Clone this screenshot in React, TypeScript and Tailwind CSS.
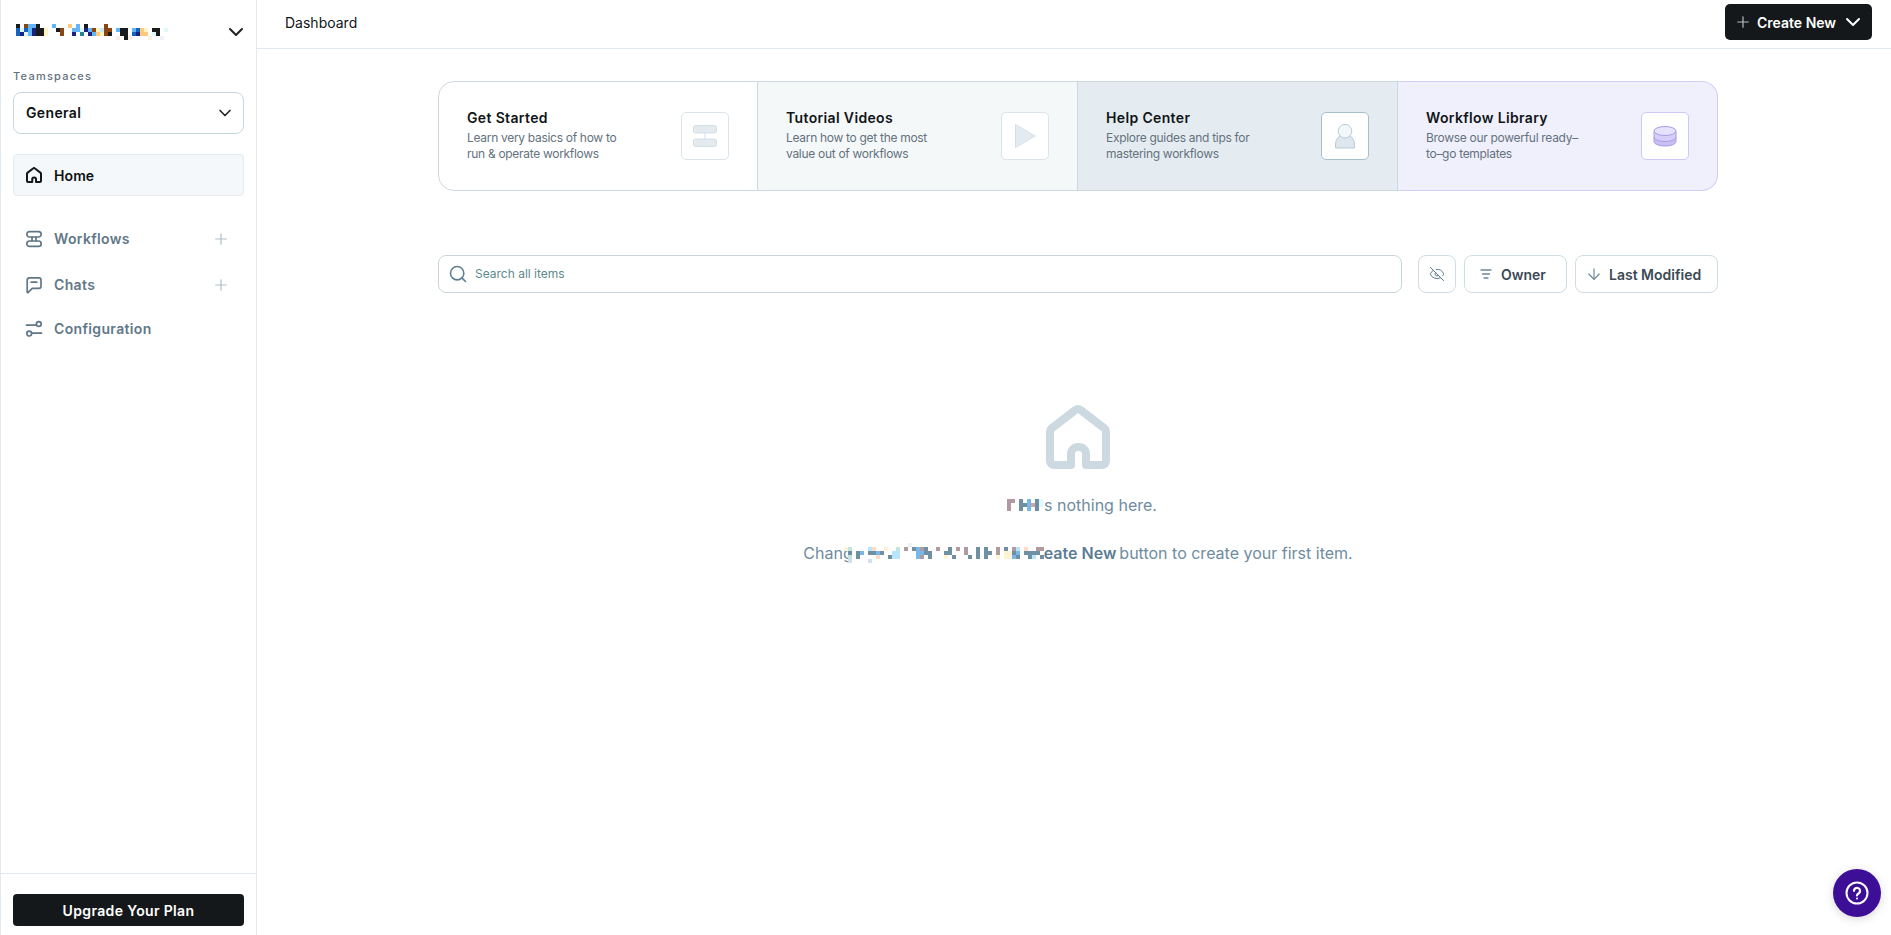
import React from "react";
import { ChevronDown, Plus, Search, EyeOff, ArrowDown } from "lucide-react";

const palette: Record<string, string> = {
  k: "#1a1a1a", b: "#1565c0", l: "#64b5f6", n: "#1a237e", o: "#8b4513", y: "#fff3c4", c: "#e0f7fa",
  g: "#ffc87a", t: "#26858a", p: "#fdeee6", w: "#eef0f8", r: "#cfe6f5",
};
const palette2: Record<string, string> = {
  s: "#6f8fa3", l: "#7ab6e8", c: "#b8e4ff", y: "#fff3d6", p: "#ffdcc8", t: "#c4e4e0", a: "#b09aa0",
  w: "#eef0f4", r: "#d0e0f0", m: "#c8a8a0", h: "#e0faff",
};

function Mosaic({ rows, colors, cols, className }: { rows: string[]; colors: Record<string, string>; cols: number; className?: string }) {
  return (
    <svg width={cols * 4} height={rows.length * 4} viewBox={`0 0 ${cols * 4} ${rows.length * 4}`} className={className} shapeRendering="crispEdges">
      {rows.map((row, ri) =>
        row.split(" ").filter(Boolean).map((tok) => {
          const col = parseInt(tok, 10);
          const ch = tok.replace(/[0-9]/g, "");
          return <rect key={ri + tok} x={col * 4} y={ri * 4} width="4" height="4" fill={colors[ch]} />;
        })
      )}
    </svg>
  );
}

const nameRows = [
  "0k 2o 3l 4l 5k 9l 13g 15l 17k 22o",
  "0b 1c 2b 3l 4n 5k 6k 7y 10k 11o 14l 15l 16c 17n 18l 19o 20y 21r 22o 23o 25l 26k 27k 29l 30b 31g 32y 34k 35k 37c",
  "0b 1n 2c 3l 4n 5k 6k 7y 11o 14n 16t 18n 19l 20g 21y 22o 23k 26k 27k 29b 30n 31g 32g 34c 35k",
  "25p 27k 28p 33p 36w",
];
const thereRows = [
  "2a 3a 5s 7l 9s 10h",
  "2a 5s 6s 7l 8m 9s 10h",
  "2a 5s 7l 9s",
];
const changeRows = [
  "16w",
  "0y 1t 6c 7p 10y 13t 15a 17s 18l 19a 20s 23a 26s 28a 30a 33s 35s 38a 40s 42a 43c 45p 48a 49a",
  "1s 3s 4l 6s 7s 8l 9s 12c 13c 18l 19l 20s 21s 25s 26s 30a 33s 35s 36s 38a 40y 41y 42s 43l 45s 46s 47s 48s",
  "1t 3s 8p 11s 12c 13c 18l 19a 21s 25y 27s 31s 33s 35s 38y 40y 41y 42l 43s 46s 47c 49s",
  "1r 6r",
];

const homePath =
  "M25 60H8a4 4 0 0 1-4-4V26.5a4 4 0 0 1 1.4-3L29.4 5a4 4 0 0 1 5.2 0L58.6 23.5a4 4 0 0 1 1.4 3V56a4 4 0 0 1-4 4H40V49a7 7 0 0 0-7-7h-1a7 7 0 0 0-7 7V60";

function HomeIcon({ size, color }: { size: number; color: string }) {
  return (
    <svg width={size} height={size} viewBox="0 0 64 64" fill="none" stroke={color} strokeWidth="8" strokeLinejoin="round" strokeLinecap="round">
      <path d={homePath} />
    </svg>
  );
}

function WorkflowIcon() {
  return (
    <svg width="18" height="18" viewBox="0 0 18 18" fill="none" stroke="#5f7888" strokeWidth="1.7" strokeLinecap="round">
      <rect x="1.8" y="1.6" width="14.4" height="5.4" rx="2.7" />
      <rect x="1.8" y="11" width="14.4" height="5.4" rx="2.7" />
      <path d="M7 7v4M11 7v4" />
    </svg>
  );
}
function ChatIcon() {
  return (
    <svg width="18" height="18" viewBox="0 0 18 18" fill="none" stroke="#5f7888" strokeWidth="1.7" strokeLinecap="round" strokeLinejoin="round">
      <path d="M4.2 1.8h9.6a2.2 2.2 0 0 1 2.2 2.2v6.2a2.2 2.2 0 0 1-2.2 2.2H7.2L3.4 16.2a.6.6 0 0 1-1.2-.4V4a2.2 2.2 0 0 1 2-2.2Z" />
      <path d="M6.2 6.2h5.6" />
    </svg>
  );
}
function ConfigIcon() {
  return (
    <svg width="18" height="18" viewBox="0 0 18 18" fill="none" stroke="#5f7888" strokeWidth="1.7" strokeLinecap="round">
      <path d="M1.5 5.2h9.5" />
      <circle cx="13.8" cy="4" r="2.4" />
      <path d="M7 13.2h9.5" />
      <circle cx="4.2" cy="13.6" r="2.4" />
    </svg>
  );
}

function NavItem({ icon, label, plus }: { icon: React.ReactNode; label: string; plus?: boolean }) {
  return (
    <div className="flex h-[44px] items-center pl-[12px] pr-[14px]">
      <span className="flex w-[18px] justify-center">{icon}</span>
      <span className="ml-[11px] flex-1 text-[14px] font-semibold tracking-[0.35px] text-[#5f7888]">{label}</span>
      {plus && <Plus size={18} strokeWidth={1.6} className="text-[#aebfca]" />}
    </div>
  );
}

function Card({ title, lines, bg, border, boxBorder, rounded, icon }: { title: string; lines: string[]; bg: string; border: string; boxBorder: string; rounded: string; icon: React.ReactNode }) {
  return (
    <div className={`flex h-full w-[320px] items-center justify-between pl-[28px] pr-[28px] ${bg} ${border} ${rounded}`}>
      <div className="pb-[3px]">
        <div className="text-[14px] font-semibold leading-[20px] tracking-[0.35px] text-[#111518]">{title}</div>
        <div className="mt-[2px] text-[12px] leading-[16px] tracking-[-0.3px] text-[#64727e]">
          {lines.map((l) => (
            <div key={l}>{l}</div>
          ))}
        </div>
      </div>
      <div className={`flex h-[48px] w-[48px] items-center justify-center rounded-[5px] border bg-white ${boxBorder}`}>{icon}</div>
    </div>
  );
}

export default function App() {
  return (
    <div className="flex h-screen overflow-hidden bg-white font-['Inter',sans-serif] text-[#111518]">
      <aside className="flex h-full w-[257px] shrink-0 flex-col border-x border-[#e2e9f0]">
        <div className="flex-1 px-[12px]">
          <div className="flex h-[63px] items-center justify-between pl-[3px]">
            <Mosaic rows={nameRows} colors={palette} cols={38} />
            <ChevronDown size={24} strokeWidth={2} className="-mr-[4px] mt-[1px] text-[#222]" />
          </div>
          <div className="mt-[6px] text-[11px] font-medium leading-[14px] tracking-[1.25px] text-[#64727e]">Teamspaces</div>
          <div className="mt-[9px] flex h-[42px] items-center justify-between rounded-[8px] border border-[#c8d6e0] pb-[2px] pl-[12px] pr-[8px]">
            <span className="text-[14px] font-semibold tracking-[0.35px] text-[#0e1114]">General</span>
            <ChevronDown size={20} strokeWidth={2} className="mt-[2px] text-[#222]" />
          </div>
          <div className="mt-[20px] flex h-[42px] items-center rounded-[4px] border border-[#e4ebf0] bg-[#f5f8fa] pl-[12px]">
            <HomeIcon size={16} color="#15181b" />
            <span className="ml-[12px] text-[14px] font-semibold tracking-[0.1px] text-[#0e1114]">Home</span>
          </div>
          <div className="mt-[20.5px]">
            <NavItem icon={<WorkflowIcon />} label="Workflows" plus />
            <div className="h-[2px]" />
            <NavItem icon={<ChatIcon />} label="Chats" plus />
            <NavItem icon={<ConfigIcon />} label="Configuration" />
          </div>
        </div>
        <div className="flex h-[62px] items-start border-t border-[#e2e9f0] px-[12px] pt-[20px]">
          <div className="flex h-[32px] w-full items-center justify-center rounded-[4px] bg-[#15181b] text-[14px] font-semibold tracking-[0.35px] text-white">
            Upgrade Your Plan
          </div>
        </div>
      </aside>
      <main className="flex min-w-0 flex-1 flex-col">
        <header className="flex h-[49px] shrink-0 items-center justify-between border-b border-[#e2e9f0] pb-[4px] pl-[28px] pr-[19px]">
          <span className="text-[14px] text-[#111518]">Dashboard</span>
          <div className="flex h-[36px] w-[147px] items-center rounded-[5px] bg-[#15181b] pl-[9px]">
            <Plus size={18} strokeWidth={1.6} className="text-[#b8bcc0]" />
            <span className="ml-[5px] text-[14px] font-semibold text-white">Create New</span>
            <ChevronDown size={24} strokeWidth={2} className="ml-[5px] text-white" />
          </div>
        </header>
        <div className="ml-[181px] w-[1280px] pt-[32px]">
          <div className="flex h-[110px]">
            <Card
              title="Get Started"
              lines={["Learn very basics of how to", "run & operate workflows"]}
              bg="bg-white"
              border="border border-[#cdd9e1]"
              boxBorder="border-[#dbe4ea]"
              rounded="rounded-l-[16px]"
              icon={
                <svg width="26" height="26" viewBox="0 0 26 26" fill="#e3ebf1" stroke="#d3dfe6">
                  <rect x="1.5" y="2.5" width="23" height="7.5" rx="2" />
                  <rect x="1.5" y="16" width="23" height="7.5" rx="2" />
                  <path d="M13 10v6" />
                </svg>
              }
            />
            <Card
              title="Tutorial Videos"
              lines={["Learn how to get the most", "value out of workflows"]}
              bg="bg-[#f5f8f9]"
              border="border-y border-r border-[#cdd9e1]"
              boxBorder="border-[#dbe4ea]"
              rounded=""
              icon={
                <svg width="24" height="26" viewBox="0 0 24 26" fill="#e3ebf1" stroke="#d3dfe6">
                  <path d="M2.5 1.5 L22 13 L2.5 24.5 Z" strokeLinejoin="round" />
                </svg>
              }
            />
            <Card
              title="Help Center"
              lines={["Explore guides and tips for", "mastering workflows"]}
              bg="bg-[#e4ecf1]"
              border="border-y border-r border-[#cdd9e1]"
              boxBorder="border-[#a9bfcc]"
              rounded=""
              icon={
                <svg width="26" height="28" viewBox="0 0 26 28" fill="#e6eef2" stroke="#b9ccd7">
                  <path d="M3.5 26v-4a9.5 9.5 0 0 1 19 0v4Z" fill="#dde7ed" />
                  <circle cx="13" cy="9.2" r="6.8" fill="#f2f7f9" />
                </svg>
              }
            />
            <Card
              title="Workflow Library"
              lines={["Browse our powerful ready–", "to–go templates"]}
              bg="bg-[#f0f0fc]"
              border="border-y border-r border-l-0 border-[#d2cdf5]"
              boxBorder="border-[#cfc8f5]"
              rounded="rounded-r-[16px]"
              icon={
                <svg width="26" height="22" viewBox="0 0 26 22" fill="#c9bff2" stroke="#a99be6" strokeWidth="1">
                  <path d="M2 12v4.5c0 2.6 5 4.5 11 4.5s11-1.9 11-4.5V12Z" />
                  <path d="M2 6.5v5.5c0 2.6 5 4.5 11 4.5s11-1.9 11-4.5V6.5Z" fill="#d6cef6" />
                  <ellipse cx="13" cy="6" rx="11" ry="4.5" fill="#e6e2fb" />
                </svg>
              }
            />
          </div>
          <div className="mt-[64px] flex h-[38px]">
            <div className="flex w-[964px] items-center rounded-[8px] border border-[#c8d6dc] pl-[9px]">
              <Search size={20} strokeWidth={1.9} className="text-[#5f7f90]" />
              <span className="ml-[7px] text-[12px] text-[#5f8a8b]">Search all items</span>
            </div>
            <div className="ml-[16px] flex w-[38px] items-center justify-center rounded-[8px] border border-[#d0dce3]">
              <EyeOff size={16} strokeWidth={1.5} className="text-[#5f7f90]" />
            </div>
            <div className="ml-[8px] flex w-[103px] items-center rounded-[8px] border border-[#d0dce3] pl-[14px]">
              <svg width="14" height="14" viewBox="0 0 14 14" fill="none" stroke="#6a8797" strokeWidth="1.3" strokeLinecap="round">
                <path d="M2 3h10M3.5 7h7M5 11h4" />
              </svg>
              <span className="ml-[8px] text-[14px] font-semibold text-[#3c4a54]">Owner</span>
            </div>
            <div className="ml-[8px] flex w-[143px] items-center rounded-[8px] border border-[#d0dce3] pl-[9px]">
              <ArrowDown size={18} strokeWidth={1.5} className="text-[#6a8797]" />
              <span className="ml-[6px] text-[14px] font-semibold text-[#3c4a54]">Last Modified</span>
            </div>
          </div>
          <div className="mt-[112px] flex flex-col items-center">
            <HomeIcon size={64} color="#cdd9e1" />
            <div className="mt-[24px] flex items-center text-[16px] leading-[24px] text-[#6f8ca0]">
              <Mosaic rows={thereRows} colors={palette2} cols={11} />
              <span className="ml-[1px]">s nothing here.</span>
            </div>
            <div className="mt-[24px] flex items-center text-[16px] leading-[24px] text-[#6f8ca0]">
              <span>Chang</span>
              <Mosaic rows={changeRows} colors={palette2} cols={50} className="-ml-[9px]" />
              <span className="font-semibold text-[#5b7d94]">eate New</span>
              <span className="ml-[3px]">button to create your first item.</span>
            </div>
          </div>
        </div>
      </main>
      <div className="fixed bottom-[18px] right-[10px] flex h-[48px] w-[48px] items-center justify-center rounded-full bg-[#3d0f96] shadow-[0_2px_10px_rgba(0,0,0,0.15)]">
        <svg width="26" height="26" viewBox="0 0 26 26" fill="none" stroke="white" strokeWidth="2">
          <circle cx="13" cy="13" r="10.5" />
          <path d="M10 10.8a3 3 0 1 1 4.8 2.4c-1.1.7-1.8 1.2-1.8 2.2" strokeWidth="2.2" strokeLinecap="round" />
          <circle cx="13" cy="18.4" r="1" fill="white" stroke="none" />
        </svg>
      </div>
    </div>
  );
}
